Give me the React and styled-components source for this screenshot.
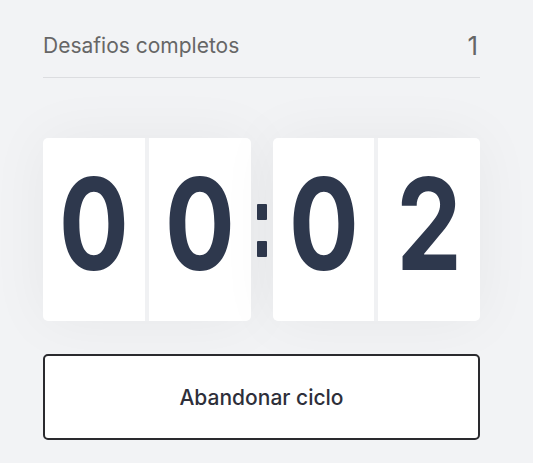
import React from "react";
import styled, { createGlobalStyle } from "styled-components";

const GlobalStyle = createGlobalStyle`
  body {
    margin: 0;
    background: #f2f3f5;
    font-family: Inter, "Noto Sans", sans-serif;
  }
`;

const Panel = styled.main`
  width: 437px;
  padding: 26px 0 0 43px;
`;

const StatRow = styled.div`
  display: flex;
  align-items: center;
  justify-content: space-between;
  height: 38px;
  padding-bottom: 13px;
  border-bottom: 1px solid #dcdde0;

  span {
    font-size: 21px;
    color: #666666;
  }

  strong {
    font-size: 26px;
    font-weight: 400;
    color: #666666;
    padding-right: 2px;
  }
`;

const Countdown = styled.div`
  display: flex;
  align-items: center;
  margin-top: 60px;
`;

const DigitGroup = styled.div`
  flex: 1;
  display: flex;
  gap: 4px;
  height: 183px;
  background: #f0f1f3;
  border-radius: 5px;
  box-shadow: 0 0 60px rgba(0, 0, 0, 0.05);
  overflow: hidden;
`;

const Digit = styled.span`
  flex: 1;
  display: flex;
  align-items: center;
  justify-content: center;
  background: #ffffff;
  padding-bottom: 10px;
`;

const Glyph = styled.span`
  display: inline-block;
  font-family: Inter, "Noto Sans", sans-serif;
  font-weight: 700;
  font-size: 127px;
  line-height: 1;
  color: #2e384d;
  transform: scaleX(0.82);
`;

const Colon = styled.span`
  width: 22px;
  display: flex;
  flex-direction: column;
  align-items: center;
  gap: 21px;
  margin-top: 2px;

  i {
    width: 10px;
    height: 16px;
    border-radius: 1px;
    background: #2e384d;
  }
`;

const AbandonButton = styled.button`
  width: 100%;
  height: 86px;
  margin-top: 33px;
  background: #ffffff;
  border: 2px solid #2a2a2e;
  border-radius: 5px;
  font-family: Inter, "Noto Sans", sans-serif;
  font-size: 21px;
  font-weight: 500;
  color: #2e2f3a;
  cursor: pointer;
`;

const App = () => {
  const minutes = ["0", "0"];
  const seconds = ["0", "2"];

  return (
    <>
      <GlobalStyle />
      <Panel>
        <StatRow>
          <span>Desafios completos</span>
          <strong>1</strong>
        </StatRow>

        <Countdown>
          <DigitGroup>
            {minutes.map((d, i) => (
              <Digit key={i}>
                <Glyph>{d}</Glyph>
              </Digit>
            ))}
          </DigitGroup>
          <Colon aria-label=":">
            <i />
            <i />
          </Colon>
          <DigitGroup>
            {seconds.map((d, i) => (
              <Digit key={i}>
                <Glyph>{d}</Glyph>
              </Digit>
            ))}
          </DigitGroup>
        </Countdown>

        <AbandonButton type="button">Abandonar ciclo</AbandonButton>
      </Panel>
    </>
  );
};

export default App;
